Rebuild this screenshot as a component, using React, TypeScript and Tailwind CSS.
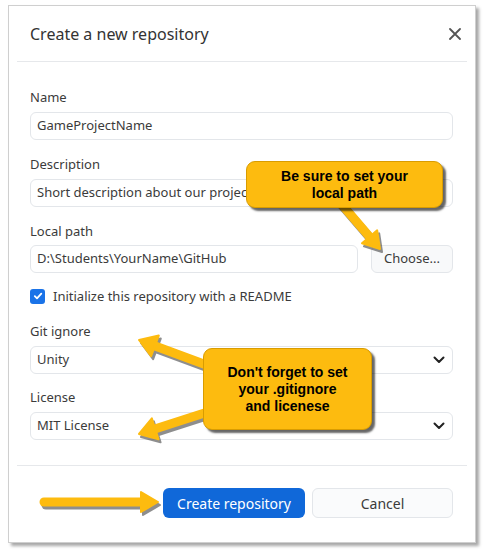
type Pt = [number, number];

const arrowHead = (from: Pt, to: Pt, hw: number, hl: number) => {
  const dx = to[0] - from[0];
  const dy = to[1] - from[1];
  const len = Math.hypot(dx, dy);
  const ux = dx / len;
  const uy = dy / len;
  const bx = to[0] - ux * hl;
  const by = to[1] - uy * hl;
  const px = -uy * (hw / 2);
  const py = ux * (hw / 2);
  const pts: Pt[] = [to, [bx + px, by + py], [bx - px, by - py]];
  return { base: [bx + ux * 2, by + uy * 2] as Pt, points: pts.map((p) => p.join(",")).join(" ") };
};

const Arrow = ({ from, to, w = 9, hw = 22, hl = 17 }: { from: Pt; to: Pt; w?: number; hw?: number; hl?: number }) => {
  const head = arrowHead(from, to, hw, hl);
  return (
    <g>
      <g transform="translate(2,3)" opacity="0.55">
        <line x1={from[0]} y1={from[1]} x2={head.base[0]} y2={head.base[1]} stroke="#333" strokeWidth={w} strokeLinecap="round" />
        <polygon points={head.points} fill="#333" stroke="#333" strokeWidth="2" strokeLinejoin="round" />
      </g>
      <line x1={from[0]} y1={from[1]} x2={head.base[0]} y2={head.base[1]} stroke="#fdbb0f" strokeWidth={w} strokeLinecap="round" />
      <polygon points={head.points} fill="#fdbb0f" stroke="#fdbb0f" strokeWidth="2" strokeLinejoin="round" />
    </g>
  );
};

const Label = ({ children }: { children: string }) => (
  <div className="text-[13px] leading-[18px] text-[#3b3b3b]">{children}</div>
);

const Field = ({ value }: { value: string }) => (
  <div className="mt-[6px] flex h-[28px] items-center rounded-[6px] border border-[#e3e6ea] bg-white px-[6px] text-[13px] text-[#3b3b3b]">
    {value}
  </div>
);

const Select = ({ value }: { value: string }) => (
  <div className="mt-[6px] flex h-[28px] items-center justify-between rounded-[6px] border border-[#e3e6ea] bg-white pl-[6px] pr-[7px] text-[13px] text-[#3b3b3b]">
    <span>{value}</span>
    <svg width="12" height="8" viewBox="0 0 12 8">
      <path d="M1.5 1.5 L6 6 L10.5 1.5" fill="none" stroke="#222" strokeWidth="2" strokeLinecap="round" strokeLinejoin="round" />
    </svg>
  </div>
);

export default function App() {
  return (
    <div className="relative h-[554px] w-[484px] bg-white pl-[8px] pt-[5px] font-['Noto_Sans',sans-serif]">
      <div className="h-[538px] w-[468px] border border-[#cfcfcf] bg-white shadow-[3px_3px_3px_rgba(0,0,0,0.35)]">
        <div className="flex h-[55px] items-center justify-between pl-[21px] pr-[14px]">
          <h1 className="text-[16px] text-[#333]">Create a new repository</h1>
          <svg width="12" height="12" viewBox="0 0 12 12">
            <path d="M1 1 L11 11 M11 1 L1 11" stroke="#555" strokeWidth="1.8" strokeLinecap="round" />
          </svg>
        </div>
        <div className="mx-[8px] border-t border-[#e6e8eb]" />

        <div className="px-[21px] pt-[26px] pr-[22px]">
          <Label>Name</Label>
          <Field value="GameProjectName" />

          <div className="mt-[15px]">
            <Label>Description</Label>
            <Field value="Short description about our project" />
          </div>

          <div className="mt-[15px]">
            <Label>Local path</Label>
            <div className="mt-[5px] flex gap-[13px]">
              <div className="flex h-[28px] flex-1 items-center rounded-[6px] border border-[#e3e6ea] bg-white px-[6px] text-[13px] text-[#3b3b3b]">
                D:\Students\YourName\GitHub
              </div>
              <button className="h-[28px] w-[82px] rounded-[6px] border border-[#e3e6ea] bg-[#f8f9fa] text-[13px] text-[#3b3b3b]">
                Choose...
              </button>
            </div>
          </div>

          <label className="mt-[14px] flex items-center gap-[8px] text-[13px] leading-[18px] text-[#3b3b3b]">
            <span className="flex h-[15px] w-[15px] items-center justify-center rounded-[3px] bg-[#1a73e8]">
              <svg width="10" height="10" viewBox="0 0 10 10">
                <path d="M1.8 5.2 L4 7.4 L8.3 2.6" fill="none" stroke="#fff" strokeWidth="1.8" strokeLinecap="round" strokeLinejoin="round" />
              </svg>
            </span>
            Initialize this repository with a README
          </label>

          <div className="mt-[17px]">
            <Label>Git ignore</Label>
            <Select value="Unity" />
          </div>

          <div className="mt-[14px]">
            <Label>License</Label>
            <Select value="MIT License" />
          </div>
        </div>

        <div className="mx-[8px] mt-[25px] border-t border-[#e6e8eb]" />

        <div className="flex justify-end gap-[7px] pr-[22px] pt-[22px]">
          <button className="h-[30px] w-[142px] rounded-[6px] bg-[#1068d9] text-[14px] text-white">
            Create repository
          </button>
          <button className="h-[30px] w-[141px] rounded-[6px] border border-[#e3e6ea] bg-[#fafbfc] text-[14px] text-[#3b3b3b]">
            Cancel
          </button>
        </div>
      </div>

      <svg className="pointer-events-none absolute left-0 top-0" width="484" height="554">
        <Arrow from={[338, 200]} to={[380, 249]} w={9} hw={20} hl={16} />
        <Arrow from={[220, 370]} to={[139, 340]} w={9} hw={22} hl={17} />
        <Arrow from={[220, 408]} to={[139, 434]} w={9} hw={22} hl={17} />
        <Arrow from={[44, 502]} to={[158, 502]} w={9} hw={20} hl={17} />
      </svg>

      <div className="absolute left-[246px] top-[161px] flex h-[47px] w-[197px] flex-col items-center justify-center rounded-[9px] border border-[#d99c00] bg-[#fdbb0f] font-['Liberation_Sans',sans-serif] text-[14px] font-bold leading-[17px] text-black shadow-[3px_3px_2px_rgba(0,0,0,0.6)]">
        <span>Be sure to set your</span>
        <span>local path</span>
      </div>

      <div className="absolute left-[203px] top-[348px] flex h-[82px] w-[169px] flex-col items-center justify-center rounded-[9px] border border-[#d99c00] bg-[#fdbb0f] font-['Liberation_Sans',sans-serif] text-[14px] font-bold leading-[17px] text-black shadow-[3px_3px_2px_rgba(0,0,0,0.6)]">
        <span>Don't forget to set</span>
        <span>your .gitignore</span>
        <span>and licenese</span>
      </div>
    </div>
  );
}
